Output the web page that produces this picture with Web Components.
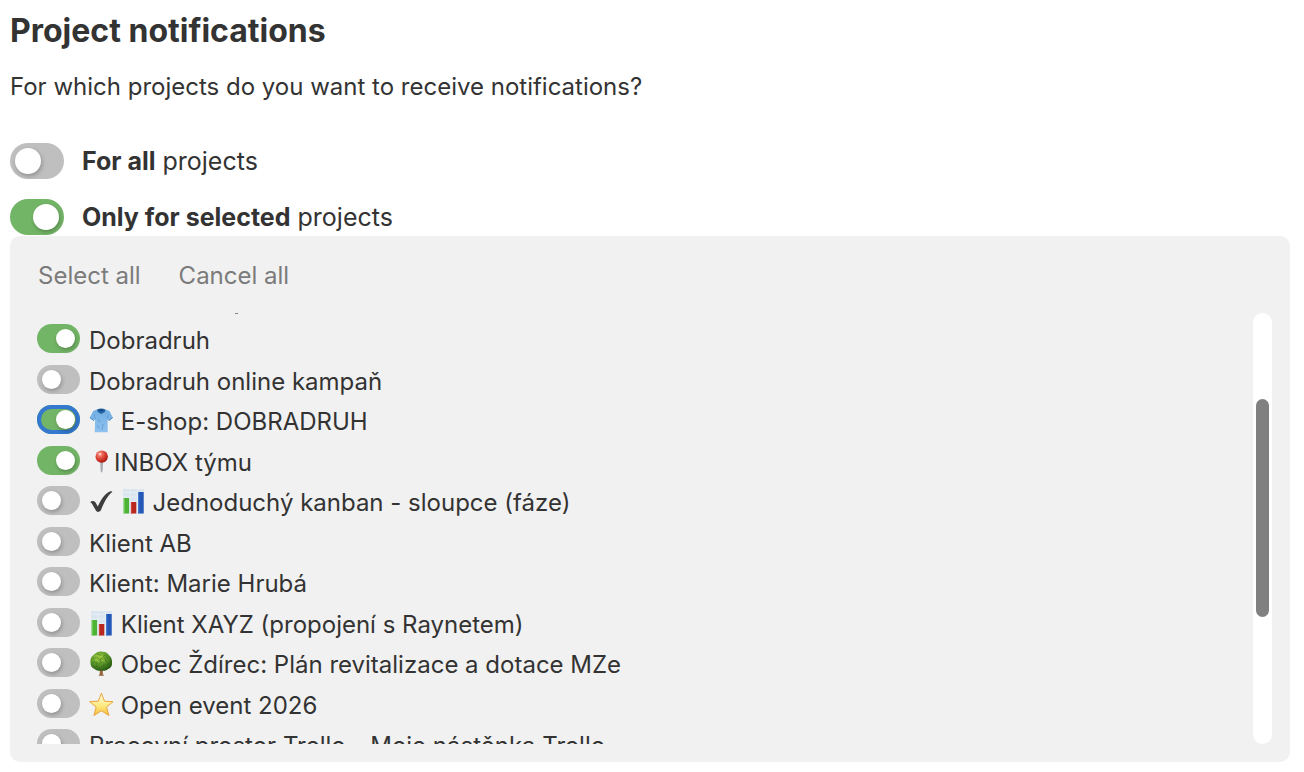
<!DOCTYPE html>
<html lang="en">
<head>
<meta charset="utf-8">
<title>Project notifications</title>
<style>
body { margin: 0; background: #fff; color: #333; font: 24px/32px Inter, "Liberation Sans", sans-serif; }
</style>
</head>
<body>
<notification-settings>
  <toggle-row size="large" name="all"><b>For all</b> projects</toggle-row>
  <toggle-row size="large" name="selected" checked><b>Only for selected</b> projects</toggle-row>
  <project-panel slot="panel">
    <toggle-row checked>Dobradruh</toggle-row>
    <toggle-row>Dobradruh online kampaň</toggle-row>
    <toggle-row checked focused><emoji-icon name="shirt"></emoji-icon> E-shop: DOBRADRUH</toggle-row>
    <toggle-row checked><emoji-icon name="pin"></emoji-icon>INBOX týmu</toggle-row>
    <toggle-row><emoji-icon name="check"></emoji-icon> <emoji-icon name="chart"></emoji-icon> Jednoduchý kanban - sloupce (fáze)</toggle-row>
    <toggle-row>Klient AB</toggle-row>
    <toggle-row>Klient: Marie Hrubá</toggle-row>
    <toggle-row><emoji-icon name="chart"></emoji-icon> Klient XAYZ (propojení s Raynetem)</toggle-row>
    <toggle-row><emoji-icon name="tree"></emoji-icon> Obec Ždírec: Plán revitalizace a dotace MZe</toggle-row>
    <toggle-row><emoji-icon name="star"></emoji-icon> Open event 2026</toggle-row>
    <toggle-row>Pracovní prostor Trello - Moje nástěnka Trello</toggle-row>
  </project-panel>
</notification-settings>

<script>
const ICONS = {
  shirt: `<defs><linearGradient id="g" x1="0" y1="0" x2="0" y2="1"><stop offset="0" stop-color="#71aee2"/><stop offset="1" stop-color="#8fc2f0"/></linearGradient></defs>
    <path d="M8 1.500 4.200 3 .7 9.700 4.800 13 6.200 10.800 5.700 24.200H18.800L18.400 10.800 19.800 13 23.900 9.700 20.400 3 16.400 1.500Q12.200 4 8 1.500Z" fill="url(#g)"/>
    <path d="M6.200 11.500 5.600 7M18.400 11.500l.7-4.500M9 10.500l2 3.500M14 16l-1 6M8.400 17.500l1.800 3" stroke="#5797d0" stroke-width=".8" fill="none"/>
    <path d="M.9 9.500l4 3.100M19.700 12.600l4-3.100" stroke="#4a86c0" stroke-width="1"/>
    <path d="M8 1.5Q12.2-.5 16.4 1.5L15.8 4 12.3 6 8.7 4Z" fill="#2362a5"/><path d="M9.5 2Q12.2.8 15 2L12.3 3.2Z" fill="#153e75"/>`,
  pin: `<defs><radialGradient id="g" cx=".36" cy=".3" r=".7"><stop offset="0" stop-color="#fff0e9"/><stop offset=".23" stop-color="#ef7262"/><stop offset=".65" stop-color="#d63a2d"/><stop offset="1" stop-color="#a81915"/></radialGradient></defs>
    <path d="M11.6 11h2l-.4 10.8-.6 1.5-.6-1.5Z" fill="#96999d" stroke="#96999d" stroke-width=".6"/><path d="M12.2 12v10" stroke="#cdd0d2" stroke-width=".6"/><circle cx="12.7" cy="7.600" r="6.200" fill="url(#g)"/>`,
  check: `<path d="M1.2 13.1C3 11.4 5.4 11.5 6.7 13.8L8.8 17.6C11.8 10.5 15.6 5.1 19.8 2.9 20.9 2.3 22.6 2.1 23.4 2.7 18 7.3 14.6 14.4 12 21.1 11.4 22.7 8.3 23.7 7.2 22.1L3.3 15.2C2.7 14.2 2.1 13.7 1.2 13.1Z" fill="#3d3d3d"/>`,
  chart: `<path d="M2 0H23V24.500H2Z" fill="#dbe5f0"/><path d="M2 3.500h21M2 8h21M2 12.500h21M9 0v24M16.300 0v24" stroke="#edf3f9" stroke-width=".6"/>
    <g transform="translate(.7 0)"><path d="M2 9H7.400V24.500H2Z" fill="#4db236"/><path d="M9.200 13H14.600V24.500H9.200Z" fill="#b9261d"/><path d="M16.400 3H22V24.500H16.400Z" fill="#2558b6"/>
    <path d="M2.600 9.500v15" stroke="#73d252"/><path d="M9.800 13.500v11" stroke="#d34234"/><path d="M17 3.500v21" stroke="#4b7fd4"/></g>`,
  tree: `<defs><radialGradient id="g" cx=".4" cy=".3" r=".7"><stop offset="0" stop-color="#9bc93f"/><stop offset=".55" stop-color="#5c9829"/><stop offset="1" stop-color="#295c13"/></radialGradient></defs>
    <path d="M11 16h2.600l.3 7 1.200 1.800H9.500l1.200-1.800Z" fill="#966640"/>
    <path d="M6.200 2.600C8 .6 11 .1 13.200.7c3-.2 5.700 1.300 7 3.800 2 1.500 3.200 4.300 2.800 7 .4 3-1.300 5.800-4.200 6.700-2 1.600-4.600 2-6.600 1.300-2.200.8-5 .2-6.600-1.500C2.800 17.100 1.200 14.300 1.500 11.500 1 8.400 2.300 5.200 4.600 4Z" fill="url(#g)"/>
    <path d="M4 7q3-3 5 0t5-1 5 2M3 12q3-3 5 0t5-1 5 0 4-1M5 16q3-2 4 0t5-1 6-1M8 3q3 0 4 2M11 8l1 4M7 12l1 4M16 6l1 5M15 12l-1 4" stroke="#285713" stroke-width=".7" fill="none" opacity=".5"/>
    <path d="M5 6q2-2 3-1M11 6q2-2 3 0M6 10q2-2 3 0M13 10q2-1 3 0" stroke="#afd759" stroke-width=".9" fill="none" opacity=".8"/>`,
  star: `<defs><linearGradient id="g" x1="0" y1="0" x2="0" y2="1"><stop offset=".1" stop-color="#fffbd4"/><stop offset=".6" stop-color="#fde779"/><stop offset="1" stop-color="#f5ba3e"/></linearGradient></defs>
    <path d="M12.400 1.200 15.500 9.200 24 9.700 17.500 15 19.900 23.500 12.400 18.800 4.900 23.500 7.200 15 .7 9.700 9.300 9.200Z" fill="url(#g)" stroke="#e9a63d" stroke-width="1" stroke-linejoin="round"/>`
};

class EmojiIcon extends HTMLElement {
  constructor() {
    super();
    this.attachShadow({ mode: "open" }).innerHTML = `
      <style>:host { display: inline-block; width: 25px; height: 25px; vertical-align: -3px; } svg { display: block; overflow: visible; }</style>
      <svg width="25" height="25" viewBox="0 0 25 25" aria-hidden="true">${ICONS[this.getAttribute("name")] || ""}</svg>`;
  }
}

class ToggleRow extends HTMLElement {
  constructor() {
    super();
    this.attachShadow({ mode: "open" }).innerHTML = `
      <style>
        :host { display: block; --w: 43px; --h: 29px; --thumb: 19px; --gap: 9px; --drop: 1px; }
        :host([size="large"]) { --w: 54px; --h: 36px; --thumb: 26px; --gap: 18px; --drop: 2px; font-size: 25px; }
        .row { display: flex; align-items: flex-start; gap: var(--gap); height: var(--h); }
        input { appearance: none; display: flex; flex: none; box-sizing: border-box; width: var(--w); height: var(--h); margin: 0; padding: 5px; border-radius: 18px; background: #bfbfbf; outline: none; }
        input::before { content: ""; width: var(--thumb); height: var(--thumb); border-radius: 50%; background: #fff; box-shadow: 1px 2px 4px rgba(0, 0, 0, .25); }
        input:checked { background: #73b567; justify-content: flex-end; }
        :host([focused]) input { box-shadow: inset 0 0 0 4px #3478cf; }
        label { white-space: nowrap; padding-top: var(--drop); }
      </style>
      <div class="row"><input type="checkbox" id="t"><label for="t"><slot></slot></label></div>`;
    this.shadowRoot.querySelector("input").checked = this.hasAttribute("checked");
  }
}

class ProjectPanel extends HTMLElement {
  constructor() {
    super();
    this.attachShadow({ mode: "open" }).innerHTML = `
      <style>
        :host { display: block; background: #f1f1f1; border-radius: 10px; padding: 24px 18px 18px 27px; }
        .actions { display: flex; gap: 38px; padding-left: 1px; }
        button { border: 0; padding: 0; background: none; color: #7b7b7b; font: inherit; }
        .body { display: flex; justify-content: space-between; height: 431px; margin-top: 21px; }
        .list { flex: 1; overflow: hidden; }
        .list::before { content: ""; display: block; width: 3px; height: 1px; margin: 0 0 10px 198px; background: #858585; }
        .rows { display: grid; grid-template-rows: repeat(6, 41px 40px); }
        .track { box-sizing: border-box; width: 19px; border-radius: 10px; background: #fff; padding: 86px 3px 0; }
        .bar { height: 218px; border-radius: 7px; background: #808080; }
      </style>
      <div class="actions"><button type="button">Select all</button><button type="button">Cancel all</button></div>
      <div class="body">
        <div class="list"><div class="rows"><slot></slot></div></div>
        <div class="track"><div class="bar"></div></div>
      </div>`;
  }
}

class NotificationSettings extends HTMLElement {
  constructor() {
    super();
    this.attachShadow({ mode: "open" }).innerHTML = `
      <style>
        :host { display: block; padding: 11px 14px 10px 10px; }
        h1 { margin: 0; font-size: 32px; line-height: 40px; font-weight: 700; }
        p { margin: 20px 0 40px; }
        .choices { display: grid; gap: 20px; margin-bottom: 1px; }
      </style>
      <h1>Project notifications</h1>
      <p>For which projects do you want to receive notifications?</p>
      <div class="choices"><slot></slot></div>
      <slot name="panel"></slot>`;
  }
}

customElements.define("emoji-icon", EmojiIcon);
customElements.define("toggle-row", ToggleRow);
customElements.define("project-panel", ProjectPanel);
customElements.define("notification-settings", NotificationSettings);
</script>
</body>
</html>
